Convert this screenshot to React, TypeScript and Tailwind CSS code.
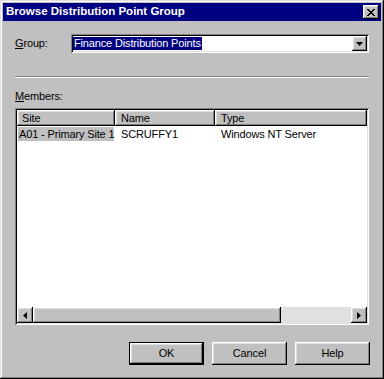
import React from "react";

const raised =
  "shadow-[inset_-1px_-1px_#000,inset_1px_1px_#fff,inset_-2px_-2px_#808080,inset_2px_2px_#dfdfdf]";
const sunken =
  "shadow-[inset_1px_1px_#808080,inset_-1px_-1px_#fff,inset_2px_2px_#000,inset_-2px_-2px_#dfdfdf]";

function Tri({ dir }: { dir: "down" | "left" | "right" }) {
  if (dir === "down")
    return (
      <svg width="7" height="4" viewBox="0 0 7 4">
        <path d="M0 0h7L3.5 4z" fill="#000" />
      </svg>
    );
  if (dir === "left")
    return (
      <svg width="4" height="7" viewBox="0 0 4 7">
        <path d="M4 0v7L0 3.5z" fill="#000" />
      </svg>
    );
  return (
    <svg width="4" height="7" viewBox="0 0 4 7">
      <path d="M0 0v7l4-3.5z" fill="#000" />
    </svg>
  );
}

function Btn({ label, def }: { label: string; def?: boolean }) {
  return (
    <div
      className={`w-[75px] h-[23px] flex items-center justify-center bg-[#c0c0c0] ${
        def
          ? "shadow-[inset_0_0_0_1px_#000,inset_-2px_-2px_#000,inset_2px_2px_#fff,inset_-3px_-3px_#808080,inset_3px_3px_#dfdfdf]"
          : raised
      }`}
    >
      {label}
    </div>
  );
}

export default function App() {
  return (
    <div
      className="w-[384px] h-[379px] bg-[#c0c0c0] p-[3px] flex flex-col text-[11px] tracking-[-0.15px] whitespace-nowrap text-black shadow-[inset_-1px_-1px_#000,inset_1px_1px_#dfdfdf,inset_-2px_-2px_#808080,inset_2px_2px_#fff]"
      style={{ fontFamily: '"Liberation Sans", Arial, sans-serif' }}
    >
      <div className="h-[18px] bg-[#000080] flex items-center justify-between pl-[3px] pr-[2px]">
        <span className="text-white font-bold text-[11.5px] tracking-[0px] leading-none">
          Browse Distribution Point Group
        </span>
        <div className={`w-[16px] h-[14px] bg-[#c0c0c0] flex items-center justify-center ${raised}`}>
          <svg width="8" height="7" viewBox="0 0 8 7">
            <path
              d="M0 0h2v1h1v1h2V1h1V0h2v1H7v1H6v1H5v1h1v1h1v1h1v1H6V6H5V5H3v1H2v1H0V6h1V5h1V4h1V3H2V2H1V1H0z"
              fill="#000"
            />
          </svg>
        </div>
      </div>

      <div className="flex flex-col px-[12px]">
        <div className="flex items-center mt-[13px] h-[19px]">
          <span className="w-[56px]">
            <u>G</u>roup:
          </span>
          <div className={`flex-1 h-[19px] bg-white flex items-center pl-[2px] pr-[2px] ${sunken}`}>
            <span className="bg-[#000080] text-white px-[1px] leading-[13px]">
              Finance Distribution Points
            </span>
            <div className="flex-1" />
            <div className={`w-[15px] h-[15px] bg-[#c0c0c0] flex items-center justify-center ${raised}`}>
              <Tri dir="down" />
            </div>
          </div>
        </div>

        <div className="mt-[23px] h-[2px] border-t border-[#808080] border-b border-b-white" />

        <div className="mt-[12px] leading-[13px]">
          <u>M</u>embers:
        </div>

        <div className={`mt-[5px] h-[217px] bg-white p-[2px] flex flex-col ${sunken}`}>
          <div className="flex h-[16px]">
            <div className={`w-[98px] bg-[#c0c0c0] pl-[5px] flex items-center ${raised}`}>Site</div>
            <div className={`w-[100px] bg-[#c0c0c0] pl-[6px] flex items-center ${raised}`}>Name</div>
            <div className={`flex-1 bg-[#c0c0c0] pl-[6px] flex items-center ${raised}`}>Type</div>
          </div>
          <div className="flex h-[14px] items-center mt-[1px]">
            <div className="w-[98px] h-full overflow-hidden pl-[1px] pr-[1px]">
              <div className="bg-[#c0c0c0] h-full pl-[1px] leading-[14px]">
                A01 - Primary Site 1
              </div>
            </div>
            <div className="w-[100px] pl-[6px]">SCRUFFY1</div>
            <div className="flex-1 pl-[6px]">Windows NT Server</div>
          </div>
          <div className="flex-1" />
          <div className="flex h-[16px]">
            <div className={`w-[16px] bg-[#c0c0c0] flex items-center justify-center ${raised}`}>
              <Tri dir="left" />
            </div>
            <div className={`w-[248px] bg-[#c0c0c0] ${raised}`} />
            <div className="flex-1 bg-[#e0e0e0]" />
            <div className={`w-[16px] bg-[#c0c0c0] flex items-center justify-center ${raised}`}>
              <Tri dir="right" />
            </div>
          </div>
        </div>

        <div className="flex justify-end gap-[8px] mt-[17px] mr-[-1px]">
          <Btn label="OK" def />
          <Btn label="Cancel" />
          <Btn label="Help" />
        </div>
      </div>
    </div>
  );
}
